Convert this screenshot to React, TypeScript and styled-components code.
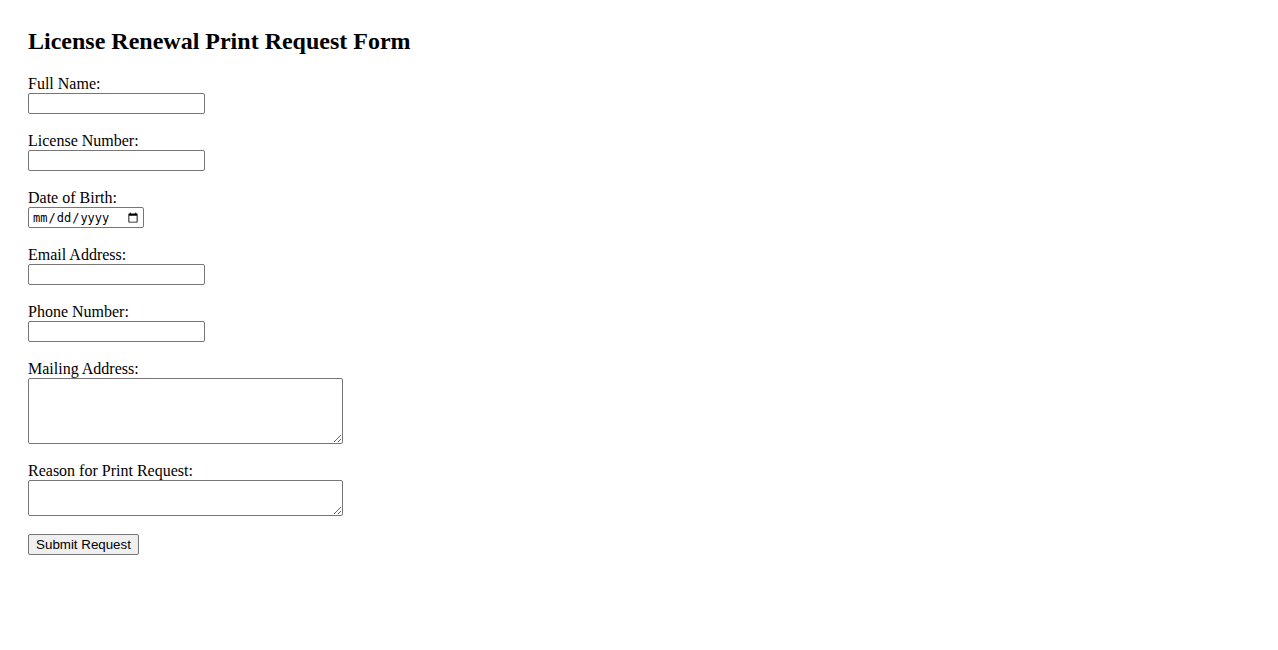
import React from 'react';
import styled, { createGlobalStyle } from 'styled-components';

const GlobalStyle = createGlobalStyle`
  body {
    margin: 0;
    background: #ffffff;
    color: #000000;
    font-family: "Liberation Serif", "Times New Roman", serif;
    font-size: 16px;
  }
`;

const Page = styled.div`
  padding: 28px;
`;

const Title = styled.h2`
  margin: 0 0 20px;
  font-size: 24px;
  line-height: 27px;
  font-weight: bold;
`;

const Form = styled.form`
  display: flex;
  flex-direction: column;
  align-items: flex-start;
`;

const Field = styled.div`
  display: flex;
  flex-direction: column;
  align-items: flex-start;
  margin-bottom: 18px;
`;

const Label = styled.label`
  display: block;
  line-height: 18px;
  height: 18px;
`;

const TextInput = styled.input<{ $width?: number }>`
  box-sizing: border-box;
  width: ${(p) => p.$width ?? 177}px;
  height: 21px;
  margin: 0;
  padding: 1px 2px;
  border: 1px solid #767676;
  border-radius: 2px;
  background: #ffffff;
  font-family: "Liberation Sans", Arial, sans-serif;
  font-size: 13.33px;
`;

const DateInput = styled(TextInput)`
  font-family: "DejaVu Sans Mono", "Liberation Mono", monospace;
  font-size: 12px;
  padding: 1px 2px 1px 3px;
`;

const TextArea = styled.textarea<{ $rows: number }>`
  box-sizing: border-box;
  width: 315px;
  height: ${(p) => p.$rows * 15 + 6}px;
  margin: 0;
  padding: 2px;
  border: 1px solid #767676;
  border-radius: 2px;
  font-family: "Liberation Mono", monospace;
  font-size: 13.33px;
  resize: both;
`;

const SubmitButton = styled.button`
  box-sizing: border-box;
  width: 111px;
  height: 21px;
  padding: 1px 6px;
  border: 1px solid #767676;
  border-radius: 2px;
  background: #efefef;
  color: #000000;
  font-family: "Liberation Sans", Arial, sans-serif;
  font-size: 13.33px;
  line-height: 17px;
  cursor: pointer;
`;

export default function App() {
  return (
    <>
      <GlobalStyle />
      <Page>
        <Title>License Renewal Print Request Form</Title>
        <Form onSubmit={(e) => e.preventDefault()}>
          <Field>
            <Label htmlFor="fullName">Full Name:</Label>
            <TextInput id="fullName" type="text" />
          </Field>
          <Field>
            <Label htmlFor="licenseNumber">License Number:</Label>
            <TextInput id="licenseNumber" type="text" />
          </Field>
          <Field>
            <Label htmlFor="dob">Date of Birth:</Label>
            <DateInput id="dob" type="date" $width={116} />
          </Field>
          <Field>
            <Label htmlFor="email">Email Address:</Label>
            <TextInput id="email" type="email" />
          </Field>
          <Field>
            <Label htmlFor="phone">Phone Number:</Label>
            <TextInput id="phone" type="tel" />
          </Field>
          <Field>
            <Label htmlFor="address">Mailing Address:</Label>
            <TextArea id="address" $rows={4} />
          </Field>
          <Field>
            <Label htmlFor="reason">Reason for Print Request:</Label>
            <TextArea id="reason" $rows={2} />
          </Field>
          <SubmitButton type="submit">Submit Request</SubmitButton>
        </Form>
      </Page>
    </>
  );
}
